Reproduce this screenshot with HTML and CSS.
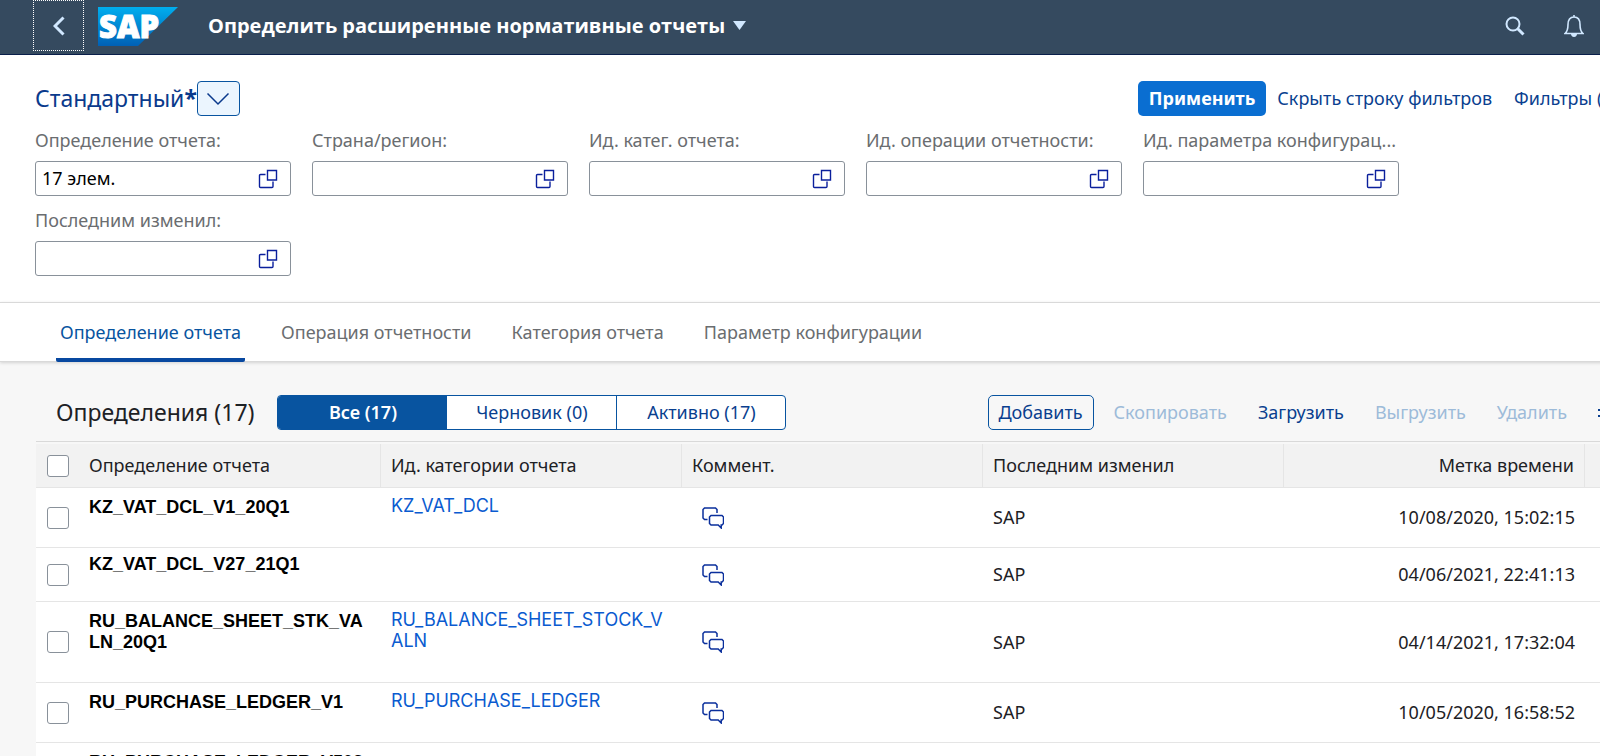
FILE: index.html
```html
<!DOCTYPE html>
<html lang="ru">
<head>
<meta charset="utf-8">
<title>Определить расширенные нормативные отчеты</title>
<link rel="stylesheet" href="styles.css">
</head>
<body>
<svg class="sprite" aria-hidden="true">
  <symbol id="i-value" viewBox="0 0 20 20"><path d="M7.5 5.5H2.5a1 1 0 0 0-1 1v11a1 1 0 0 0 1 1h11.500a1 1 0 0 0 1-1V12.500M9.500 1.500h9v9.500h-9z"/></symbol>
  <symbol id="i-chat" viewBox="0 0 22 22"><path d="M5.500 12.500H2.500l-1.500-1.500V2.500l1.500-1.500h11l1.500 1.500v3.500M9 8.500h11l1.500 1.500v6.500L20 18h-.800v3l-3-3H9l-1.500-1.500V10z"/></symbol>
</svg>
<div class="page">
  <header class="shell">
    <button class="back" type="button" aria-label="Назад"><svg viewBox="0 0 12 20" width="12" height="20"><path d="M10.500 1.500 2 10l8.500 8.500"/></svg></button>
    <svg class="logo" viewBox="0 0 80 40" width="80" height="40" role="img" aria-label="SAP">
      <defs><linearGradient id="sap" x1="0" y1="0" x2="0" y2="1"><stop offset="0" stop-color="#00aeef"/><stop offset="1" stop-color="#0060b5"/></linearGradient></defs>
      <path d="M0 1h80L40 40H0z" fill="url(#sap)"/>
      <text class="logo-text" x="1" y="32">SAP</text>
    </svg>
    <button class="app-title" type="button">Определить расширенные нормативные отчеты<svg viewBox="0 0 13 9" width="13" height="9"><path d="M0 0h13L6.500 9z"/></svg></button>
    <div class="shell-tools">
      <button type="button" aria-label="Поиск"><svg viewBox="0 0 20 20" width="20" height="20"><circle cx="8" cy="8" r="6.500" stroke-width="2"/><path d="m12.500 12.500 6 6" stroke-width="3"/></svg></button>
      <button type="button" aria-label="Уведомления"><svg viewBox="0 0 20 22" width="20" height="22"><path stroke-width="1.600" d="M1 18.500c2.500-2 3-4 3-9C4 5 6 2 10 2s6 3 6 7.500c0 5 .500 7 3 9zM10 2V0"/><path class="solid" d="M7 19h6c0 1.500-1 3-3 3s-3-1.500-3-3z"/></svg></button>
    </div>
  </header>

  <section class="filters">
    <div class="filter-head">
      <h2 class="variant">Стандартный<b>*</b></h2>
      <button class="variant-btn" type="button" aria-label="Выбрать вариант"><svg viewBox="0 0 24 14" width="24" height="14"><path d="m1.500 1.500 10.500 10.500 10.500-10.500"/></svg></button>
      <div class="filter-actions">
        <button class="btn primary" type="button">Применить</button>
        <button class="btn" type="button">Скрыть строку фильтров</button>
        <button class="btn" type="button">Фильтры (1)</button>
      </div>
    </div>
    <div class="fields">
      <div class="field"><label for="f1">Определение отчета:</label><div class="box"><input id="f1" type="text" value="17 элем."><svg><use href="#i-value"/></svg></div></div>
      <div class="field"><label for="f2">Страна/регион:</label><div class="box"><input id="f2" type="text"><svg><use href="#i-value"/></svg></div></div>
      <div class="field"><label for="f3">Ид. катег. отчета:</label><div class="box"><input id="f3" type="text"><svg><use href="#i-value"/></svg></div></div>
      <div class="field"><label for="f4">Ид. операции отчетности:</label><div class="box"><input id="f4" type="text"><svg><use href="#i-value"/></svg></div></div>
      <div class="field"><label for="f5">Ид. параметра конфигурац...</label><div class="box"><input id="f5" type="text"><svg><use href="#i-value"/></svg></div></div>
      <div class="field"><label for="f6">Последним изменил:</label><div class="box"><input id="f6" type="text"><svg><use href="#i-value"/></svg></div></div>
    </div>
  </section>

  <nav class="tabs">
    <a class="tab active" href="#definitions">Определение отчета</a>
    <a class="tab" href="#activity">Операция отчетности</a>
    <a class="tab" href="#category">Категория отчета</a>
    <a class="tab" href="#parameter">Параметр конфигурации</a>
  </nav>

  <main class="content" id="definitions">
    <div class="toolbar">
      <h1>Определения (17)</h1>
      <div class="segments">
        <button class="on" type="button">Все (17)</button>
        <button type="button">Черновик (0)</button>
        <button type="button">Активно (17)</button>
      </div>
      <div class="table-actions">
        <button class="btn outlined" type="button">Добавить</button>
        <button class="btn" type="button" disabled>Скопировать</button>
        <button class="btn" type="button">Загрузить</button>
        <button class="btn" type="button" disabled>Выгрузить</button>
        <button class="btn" type="button" disabled>Удалить</button>
        <button class="btn" type="button" aria-label="Настройки"><svg class="gear" viewBox="0 0 20 20" width="20" height="20"><circle cx="10" cy="10" r="3"/><circle cx="10" cy="10" r="7"/><path d="M10 0v3M10 17v3M0 7h3M0 13h3M17 10h3M3 3l2 2M15 15l2 2M3 17l2-2M15 5l2-2"/></svg></button>
      </div>
    </div>
    <table>
      <colgroup><col class="c-check"><col class="c-name"><col class="c-mid"><col class="c-mid"><col class="c-mid"><col class="c-mid"><col></colgroup>
      <thead>
        <tr><th class="check"><input type="checkbox" aria-label="Выбрать все"></th><th>Определение отчета</th><th>Ид. категории отчета</th><th>Коммент.</th><th>Последним изменил</th><th class="end">Метка времени</th><th></th></tr>
      </thead>
      <tbody>
        <tr><td class="check"><input type="checkbox" aria-label="KZ_VAT_DCL_V1_20Q1"></td><td class="name">KZ_VAT_DCL_V1_20Q1</td><td class="cat"><a href="#cat">KZ_VAT_DCL</a></td><td><button class="chat" type="button" aria-label="Комментарии"><svg><use href="#i-chat"/></svg></button></td><td>SAP</td><td class="end">10/08/2020, 15:02:15</td><td></td></tr>
        <tr class="compact"><td class="check"><input type="checkbox" aria-label="KZ_VAT_DCL_V27_21Q1"></td><td class="name">KZ_VAT_DCL_V27_21Q1</td><td class="cat"></td><td><button class="chat" type="button" aria-label="Комментарии"><svg><use href="#i-chat"/></svg></button></td><td>SAP</td><td class="end">04/06/2021, 22:41:13</td><td></td></tr>
        <tr><td class="check"><input type="checkbox" aria-label="RU_BALANCE_SHEET_STK_VALN_20Q1"></td><td class="name">RU_BALANCE_SHEET_STK_VA<wbr>LN_20Q1</td><td class="cat"><a href="#cat">RU_BALANCE_SHEET_STOCK_V<wbr>ALN</a></td><td><button class="chat" type="button" aria-label="Комментарии"><svg><use href="#i-chat"/></svg></button></td><td>SAP</td><td class="end">04/14/2021, 17:32:04</td><td></td></tr>
        <tr><td class="check"><input type="checkbox" aria-label="RU_PURCHASE_LEDGER_V1"></td><td class="name">RU_PURCHASE_LEDGER_V1</td><td class="cat"><a href="#cat">RU_PURCHASE_LEDGER</a></td><td><button class="chat" type="button" aria-label="Комментарии"><svg><use href="#i-chat"/></svg></button></td><td>SAP</td><td class="end">10/05/2020, 16:58:52</td><td></td></tr>
        <tr><td class="check"></td><td class="name">RU_PURCHASE_LEDGER_V503</td><td class="cat"></td><td></td><td></td><td></td><td></td></tr>
      </tbody>
    </table>
  </main>
</div>
</body>
</html>
```

FILE: styles.css
```css
* { box-sizing: border-box; }
html, body { height: 100%; }
body { margin: 0; overflow: hidden; background: #f7f7f7; color: #1d2125; font: 18px/21px "Noto Sans", "Open Sans", sans-serif; }
button, input { font: inherit; color: inherit; margin: 0; }
button { background: none; border: 0; padding: 0; white-space: nowrap; }
h1, h2 { margin: 0; font-weight: 400; }
a { text-decoration: none; }
svg { display: block; flex: none; fill: none; stroke: currentColor; }
.sprite { position: absolute; width: 0; height: 0; }

/* the page runs past the right edge of the window */
.page { width: calc(100% + 64px); }

.shell { display: flex; align-items: center; height: 55px; padding: 0 80px 3px 33px; background: #354a5f; border-bottom: 1px solid #0a1f4a; color: #d1e8ff; }
.back { display: flex; align-items: center; justify-content: center; width: 51px; height: 51px; border: 1px dotted #fff; stroke-width: 3; }
.logo { margin-left: 14px; stroke: none; }
.logo-text { font: 900 31px "Noto Sans", sans-serif; fill: #fff; stroke: #fff; stroke-width: 1; }
.app-title { display: flex; align-items: center; gap: 8px; margin-left: 30px; font-family: "Open Sans", sans-serif; font-size: 20px; font-weight: 700; color: #fff; }
.app-title svg { fill: #d1e8ff; stroke: none; }
.shell-tools { display: flex; align-items: center; gap: 39px; margin-left: auto; }
.solid { fill: currentColor; stroke: none; }

.filters { padding: 26px 35px; background: #fff; }
.filter-head { display: flex; align-items: center; }
.variant { padding-bottom: 2px; font-size: 23px; line-height: 28px; color: #0a3a8c; }
.variant-btn { display: flex; align-items: center; justify-content: center; width: 43px; height: 35px; border: 1px solid #0854a0; border-radius: 4px; background: #ebf5fe; color: #0a3a8c; stroke-width: 1.5; }
.filter-actions { display: flex; margin-left: auto; }
.btn { height: 35px; padding: 0 10px; border: 1px solid transparent; border-radius: 5px; color: #0a3f8f; }
.btn:disabled { color: #9dbbd9; }
.btn.primary { background: #0a6ed1; color: #fff; font-weight: 700; }
.btn.outlined { border-color: #0854a0; }
.fields { display: grid; grid-template-columns: repeat(auto-fill, 256px); gap: 14px 21px; margin-top: 14px; }
.field label { display: block; white-space: nowrap; color: #6a6d70; }
.box { display: flex; align-items: center; height: 35px; margin-top: 10px; padding-right: 12px; border: 1px solid #89919a; border-radius: 3px; background: #fff; color: #0a1f9c; }
.box input { flex: 1; min-width: 0; padding: 0 6px; border: 0; outline: 0; background: none; color: #000; }
.box svg { width: 20px; height: 20px; stroke-width: 1.4; }

.tabs { display: flex; height: 60px; padding: 0 56px; gap: 32px; background: #fff; border-top: 1px solid #d9d9d9; border-bottom: 1px solid #d9d9d9; box-shadow: 0 1px 3px #00000026; }
.tab { display: flex; align-items: center; height: 59px; padding: 4px 4px 0; color: #6a6d70; border-bottom: 4px solid transparent; border-radius: 2px; }
.tab.active { color: #0854a0; border-bottom-color: #0848a0; }

.content { padding: 33px 0 0 36px; }
.toolbar { display: flex; align-items: center; height: 47px; padding: 0 35px 11px 20px; border-bottom: 1px solid #d9d9d9; }
.toolbar h1 { padding-bottom: 2px; font-size: 23px; line-height: 28px; white-space: nowrap; }
.segments { display: grid; grid-template-columns: repeat(3, 1fr); width: 509px; height: 35px; margin-left: 23px; border: 1px solid #0854a0; border-radius: 4px; background: #fff; color: #0a3f8f; overflow: hidden; }
.segments button + button + button { border-left: 1px solid #0854a0; }
.segments .on { background: #0854a0; color: #fff; font-weight: 600; }
.table-actions { display: flex; gap: 9px; margin-left: auto; }
.gear { stroke-width: 2; }

table { width: 100%; margin-top: 2px; table-layout: fixed; border-collapse: separate; border-spacing: 0; }
.c-check { width: 43px; }
.c-name { width: 302px; }
.c-mid { width: 301px; }
th { height: 44px; padding: 0 10px; background: #f2f2f2; border-right: 1px solid #e5e5e5; border-bottom: 1px solid #e5e5e5; font-weight: 400; text-align: left; }
td { height: 60px; padding: 0 10px; background: #fff; border-bottom: 1px solid #e5e5e5; }
.compact td { height: 54px; }
.check { padding: 0 0 0 11px; border-right: 0; }
.end { text-align: right; }
.name { padding: 9px 10px 29px; font-family: "Liberation Sans", Arial, sans-serif; font-weight: 700; color: #000; vertical-align: top; }
.cat { padding-top: 7px; font-family: Inter, sans-serif; vertical-align: top; color: #0a5bd0; }
.compact .name { padding: 6px 10px 0; }
.cat a { color: #0a5bd0; }
input[type="checkbox"] { display: block; appearance: none; width: 22px; height: 22px; border: 1px solid #89919a; border-radius: 3px; background: #fff; }
.chat { display: block; margin-left: 10px; color: #0a2f9c; }
.chat svg { width: 22px; height: 22px; stroke-width: 1.5; }
```
